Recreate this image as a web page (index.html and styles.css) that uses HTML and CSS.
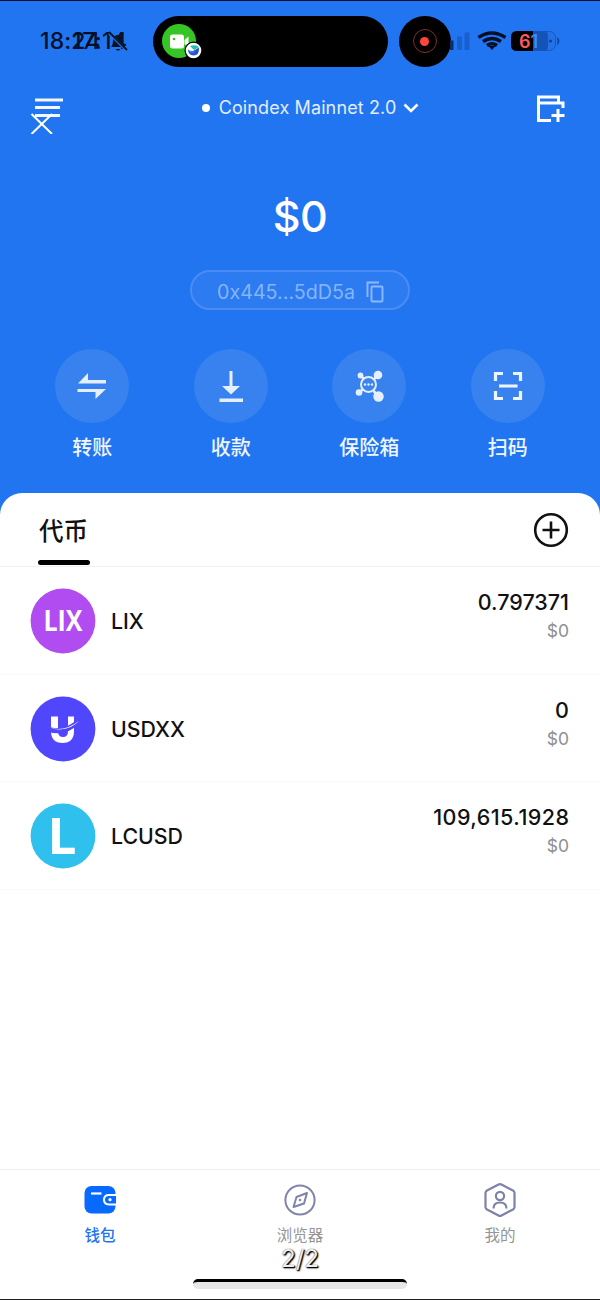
FILE: index.html
```html
<!DOCTYPE html>
<html lang="zh-CN">
<head>
<meta charset="utf-8">
<title>Wallet</title>
<link rel="stylesheet" href="styles.css">
</head>
<body>
<main class="phone">
  <div class="status">
    <div class="times"><span class="time">18:24</span><span class="time time-alt">17:14</span>
      <svg class="bell" width="22" height="22" viewBox="0 0 22 22"><path d="M4 16q2-2 2-7a5 5 0 0 1 10 0q0 5 2 7ZM8.500 18h5q-2.500 3-5 0" fill="#071426"/><path d="M2 2l18 18" stroke="#2175f1" stroke-width="2.600"/><path d="M2 1l18 18" stroke="#071426" stroke-width="1.800"/></svg>
    </div>
    <div class="island">
      <svg width="44" height="40" viewBox="0 0 44 40"><circle cx="17" cy="19" r="17" fill="#35c524"/><rect x="8" y="12.500" width="14" height="14" rx="2.500" fill="#fff"/><path d="M22.500 18l4-3.500v11l-4-3.500Z" fill="#fff"/><circle cx="12" cy="17" r="1.300" fill="#35c524"/><circle cx="31.500" cy="28.500" r="9" fill="#000"/><circle cx="31.500" cy="28.500" r="7.800" fill="#fff"/><path d="M26 27.500q3 2.500 6 1l5-3q.5 8-5.500 8-5.500-.5-5.500-6" fill="#2853c9"/><path d="M28 24l4 4 5-3q-3-3-9-1Z" fill="#26bdb4"/><path d="M26 28q4 3 7 1-3 4-7-1" fill="#37a4ee"/></svg>
    </div>
    <div class="record"><span class="record-ring"><span class="record-dot"></span></span></div>
    <svg class="signals" width="112" height="26" viewBox="0 0 112 26">
      <g fill="#1a5fce"><rect x="7" y="8.500" width="5" height="13.500" rx="1"/><rect x="14.500" y="4.500" width="5" height="17.500" rx="1"/></g><rect x="0" y="12.500" width="3.500" height="9.500" fill="#0b2d68"/>
      <g fill="none" stroke="#041027" stroke-width="3.500"><path d="M28.500 9.500q13-9 27 0"/><path d="M33 13.500q9-6 18 0"/><path d="M37 17.500q5-3.500 10 0"/></g><path d="M38.500 18h7l-3.500 4Z" fill="#041027"/>
      <rect x="61.500" y="3.500" width="44" height="19" rx="6" fill="#2471e7" stroke="#1658bd"/><path d="M67 3h16v20H67q-6 0-6-6V9q0-6 6-6Z" fill="#000"/><path d="M83 3.500h11q4 0 4 4v11q0 4-4 4H83Z" fill="#1554b7"/><path d="M107.500 9.500q3 3.500 0 7" fill="#173e80" stroke="#173e80"/><circle cx="100.500" cy="13" r="1.500" fill="#173e80"/>
      <text x="69" y="19.500" class="battery"><tspan fill="#ff5a55">6</tspan><tspan fill="#3f8bf0">1</tspan></text>
    </svg>
  </div>

  <header class="topbar">
    <svg width="34" height="40" viewBox="0 0 34 40" fill="none" stroke="#fff"><path d="M5 6h28M5 13.500h25M5 21.500h25" stroke-width="2.800" opacity=".95"/><path d="M1.500 20l20.500 20M22 20l-20.500 20" stroke-width="2"/></svg>
    <div class="network"><span class="network-dot"></span><span>Coindex Mainnet 2.0</span><svg width="16" height="12" viewBox="0 0 16 12"><path d="M1.500 2.500l6.500 6.500 6.500-6.500" fill="none" stroke="#fff" stroke-width="2.600"/></svg></div>
    <svg class="add-wallet" width="30" height="28" viewBox="0 0 30 28" fill="none" stroke="#fff" stroke-width="3"><path d="M15 26.500H2.500V3H22.500v6M2.500 9H27V14M22 15v13M15.500 21.500h13"/></svg>
  </header>

  <section class="balance">
    <div class="total">$0</div>
    <div class="address"><span>0x445...5dD5a</span><svg width="18" height="22" viewBox="0 0 18 22" fill="none" stroke="#8db8fa" stroke-width="1.900"><path d="M1.500 16V1.500H13"/><rect x="5.500" y="5.500" width="11" height="15" rx="1"/></svg></div>
  </section>

  <nav class="actions">
    <div class="action"><span class="disc"><svg width="74" height="74" viewBox="0 0 74 74" fill="#e6efff"><path d="M23 34.500l10-10.500v7h18v3.500ZM22.500 40H51L40.500 50v-7h-18Z"/></svg></span><span>转账</span></div>
    <div class="action"><span class="disc"><svg width="74" height="74" viewBox="0 0 74 74" fill="#e6efff"><path d="M35.500 22h3v15H46l-9 8.500-9-8.500h7.500ZM25.500 49.500h23.500v3.500H25.500Z"/></svg></span><span>收款</span></div>
    <div class="action"><span class="disc"><svg width="74" height="74" viewBox="0 0 74 74" fill="#e6efff"><g transform="translate(.5 0)" ><g stroke="#e6efff" stroke-width="2.500"><path d="M28 26l4 5M45 26l-4 5M27 43l4-3M45 46l-4-4" fill="none"/><circle cx="36" cy="35.500" r="7.500" fill="#3d84ef" stroke-width="2"/></g><circle cx="28" cy="26.500" r="2.900"/><circle cx="45.500" cy="26" r="4.300"/><circle cx="26.500" cy="43.500" r="3.300"/><circle cx="46" cy="47.500" r="5.200"/><circle cx="32.500" cy="35.500" r="1.200"/><circle cx="36" cy="35.500" r="1.200"/><circle cx="39.500" cy="35.500" r="1.200"/></g></svg></span><span>保险箱</span></div>
    <div class="action"><span class="disc"><svg width="74" height="74" viewBox="0 0 74 74" fill="none" stroke="#eff5ff" stroke-width="3.200"><path d="M24.500 32v-7.500H32M42 24.500h7.500V32M49.500 42v7.500H42M32 49.500h-7.500V42M28 37h18.500"/></svg></span><span>扫码</span></div>
  </nav>

  <section class="tokens">
    <div class="tabs"><span class="tab">代币</span><svg width="36" height="36" viewBox="0 0 36 36" fill="none" stroke="#111"><circle cx="18" cy="18" r="15.800" stroke-width="2.600"/><path d="M9.500 18h17M18 9.500v17" stroke-width="2.600"/></svg></div>
    <div class="token"><svg class="coin" width="66" height="66" viewBox="0 0 66 66"><circle cx="33" cy="33" r="32.400" fill="#b14cf0"/><text x="33" y="43" class="coin-lix" textLength="39" lengthAdjust="spacingAndGlyphs">LIX</text></svg><span class="name">LIX</span><div class="amount"><b>0.797371</b><small>$0</small></div></div>
    <div class="token"><svg class="coin" width="66" height="66" viewBox="0 0 66 66"><circle cx="33" cy="33" r="32.400" fill="#5046fb"/><path d="M21 20.500h7V35q0 6 5 6t5-6V20.500H44V35q0 12-11.500 12T21 35Z" fill="#fff"/><path d="M16 32q17 8 33-7" fill="none" stroke="#5046fb" stroke-width="5"/><path d="M15.500 30.500q18 7 34-6-13 14-34 6" fill="#fff"/></svg><span class="name">USDXX</span><div class="amount"><b>0</b><small>$0</small></div></div>
    <div class="token"><svg class="coin" width="66" height="66" viewBox="0 0 66 66"><circle cx="33" cy="33" r="32.400" fill="#2fc0ee"/><text x="17.500" y="51" class="coin-l" textLength="29" lengthAdjust="spacingAndGlyphs">L</text></svg><span class="name">LCUSD</span><div class="amount"><b class="wide">109,615.1928</b><small>$0</small></div></div>
  </section>

  <footer class="nav">
    <div class="nav-item active"><svg width="36" height="36" viewBox="0 0 36 36"><rect x="2.500" y="4" width="31" height="27.500" rx="7" fill="#0869ff"/><path d="M9 11.500h10.500" stroke="#fff" stroke-width="2.200"/><path d="M34 13h-7q-5 0-5 4.700t5 4.700h7" fill="#0869ff" stroke="#fff" stroke-width="2"/><circle cx="28" cy="17.700" r="1.600" fill="#fff"/></svg><span>钱包</span></div>
    <div class="nav-item"><svg width="36" height="36" viewBox="0 0 36 36" fill="none" stroke="#8084a8" stroke-width="2"><circle cx="18" cy="18" r="14.600"/><path d="M25 11l-3 10.500-10.500 3.500 3-10Z" stroke-linejoin="round"/><circle cx="18" cy="18" r="1.300" fill="#8084a8" stroke="none"/></svg><span>浏览器</span></div>
    <div class="nav-item"><svg width="36" height="36" viewBox="0 0 36 36" fill="none" stroke="#7d82a8" stroke-width="2.200" stroke-linejoin="round"><path d="M16.500 2.500q1.500-.8 3 0l11.500 6q1.500.8 1.500 2.500v14q0 1.700-1.500 2.500l-11.500 6q-1.500.8-3 0l-11.500-6q-1.500-.8-1.500-2.500V11q0-1.700 1.500-2.500Z"/><circle cx="18" cy="14" r="4.100"/><path d="M11.500 26.500q0-6 6.500-6t6.500 6"/></svg><span>我的</span></div>
    <div class="pager">2/2</div>
    <div class="home"></div>
  </footer>
</main>
</body>
</html>
```
FILE: styles.css
```css
* { box-sizing: border-box; }
body { margin: 0; }
svg { display: block; flex: none; }
.phone {
  width: 600px; height: 1300px; display: flex; flex-direction: column;
  background: #2175f1; border-top: 1px solid #05102c; border-bottom: 1px solid #222;
  font-family: Inter, "Noto Sans CJK SC", sans-serif; color: #fff; overflow: hidden;
}
.status { height: 81px; padding: 14.500px 0 0 40px; display: flex; align-items: flex-start; flex: none; }
.times { position: relative; width: 112.500px; height: 51px; font-size: 23px; font-weight: 500; line-height: 51px; color: #041027; }
.time { display: block; letter-spacing: .1px; }
.time-alt { position: absolute; left: 32px; top: 0; letter-spacing: .4px; }
.bell { position: absolute; left: 67px; top: 15px; }
.island { width: 235px; height: 51.500px; border-radius: 26px; background: #000; padding: 6px 9.500px; }
.record { width: 52px; height: 51.500px; margin-left: 11px; border-radius: 50%; background: #000; display: grid; place-items: center; }
.record-ring { width: 24px; height: 24px; border: 1.500px solid #812f2b; border-radius: 50%; display: grid; place-items: center; }
.record-dot { width: 9px; height: 9px; border-radius: 50%; background: #ff453a; }
.signals { margin-top: 12.500px; margin-left: -1px; }
.battery { font: 600 18px Inter, sans-serif; }
.topbar { height: 54px; padding: 12px 34px 0 30px; display: flex; justify-content: space-between; align-items: flex-start; flex: none; }
.network { margin-left: 21px; height: 27px; display: flex; align-items: center; font-size: 18px; letter-spacing: .12px; color: #e3edff; }
.network-dot { width: 8px; height: 8px; border-radius: 50%; background: #fff; margin-right: 9px; }
.network svg { margin-left: 7px; }
.balance { height: 213px; padding-top: 54px; display: flex; flex-direction: column; align-items: center; flex: none; }
.total { height: 52px; line-height: 52px; font-size: 43px; font-weight: 500; letter-spacing: -.5px; }
.address { width: 220px; height: 40px; margin-top: 28px; padding: 3px 24px 0 25px; border: 2px solid #4a8cf4; border-radius: 20px; background: #2c7bf1; color: #86b4f9; font-size: 19.700px; display: flex; align-items: center; justify-content: space-between; }
.actions { height: 144px; padding: 0 23px; display: grid; grid-template-columns: repeat(4, 1fr); flex: none; }
.action { display: flex; flex-direction: column; align-items: center; font-size: 20px; line-height: 30px; font-weight: 500; gap: 10px; color: #f0f5ff; }
.disc { width: 74px; height: 74px; border-radius: 50%; background: #3882f0; }
.tokens { flex: 1; background: #fff; color: #111; border-radius: 22px 22px 0 0; }
.tabs { height: 74px; padding: 0 31px 0 38px; display: flex; align-items: center; justify-content: space-between; border-bottom: 1px solid #f1f1f1; }
.tab { height: 74px; width: 52px; padding-left: 1px; font-size: 24.500px; line-height: 76px; font-weight: 500; position: relative; white-space: nowrap; }
.tab::after { content: ""; position: absolute; left: 0; top: 67px; width: 52px; height: 5px; border-radius: 3px; background: #000; }
.token { height: 107.700px; padding: 1px 31px 0 30px; display: flex; align-items: center; border-bottom: 1px solid #fafafa; }
.name { margin-left: 15px; font-size: 21.300px; font-weight: 500; }
.amount { margin-left: auto; display: flex; flex-direction: column; align-items: flex-end; height: 68px; }
.amount b { font-size: 21.500px; line-height: 30px; font-weight: 500; }
.amount .wide { letter-spacing: .45px; margin-right: -.45px; }
.amount small { font-size: 17.500px; line-height: 28px; color: #8e8e93; }
.coin-lix { font: 700 29px "Open Sans", sans-serif; fill: #fff; text-anchor: middle; }
.coin-l { font: 700 50px/1 "Open Sans", sans-serif; fill: #fff; }
.nav { position: relative; height: 130px; flex: none; background: #fff; border-top: 1px solid #eee; display: grid; grid-template-columns: repeat(3, 1fr); color: #949494; }
.nav-item { padding-top: 12px; display: flex; flex-direction: column; align-items: center; gap: 6px; font-size: 15.500px; line-height: 24px; }
.active { color: #1c73f4; font-weight: 500; }
.pager { position: absolute; left: 0; right: 0; top: 74px; text-align: center; font-size: 24px; line-height: 30px; color: #eee; text-shadow: 1px 1px 1px #000, 1px 1px 2px #000, 0 0 1px #555; }
.home { position: absolute; left: 193px; top: 109px; width: 214px; height: 10px; border-radius: 5px; background: #e7e7e7; border-top: 3px solid #000; }
```
